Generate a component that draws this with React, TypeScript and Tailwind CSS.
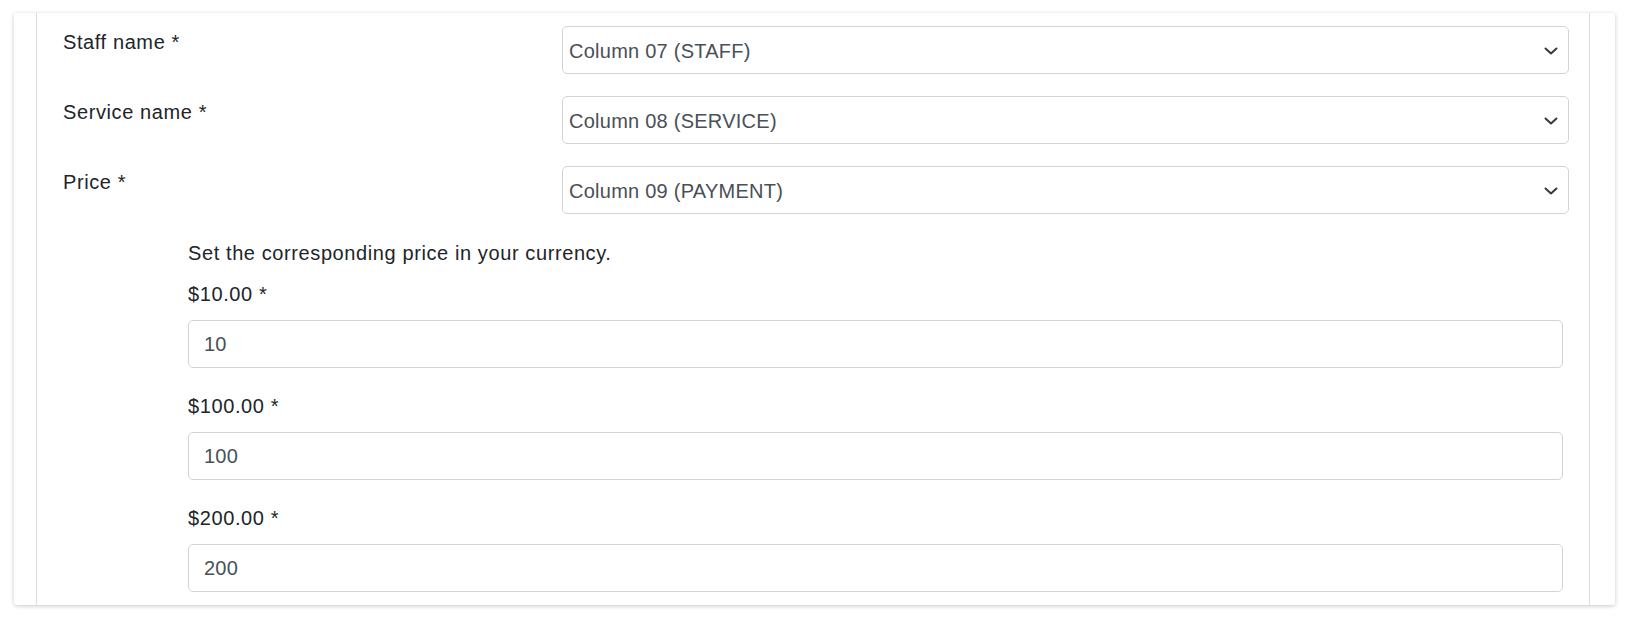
import type { ReactNode } from 'react';

const font = { fontFamily: '"Liberation Sans", Arial, sans-serif' };

function Chevron() {
  return (
    <svg width="14" height="8" viewBox="0 0 14 8" fill="none" className="shrink-0">
      <path d="M1.5 1.5L7 6.5L12.5 1.5" stroke="#343a40" strokeWidth="2" strokeLinecap="round" strokeLinejoin="round" />
    </svg>
  );
}

function SelectBox({ value }: { value: string }) {
  return (
    <div className="h-[48px] flex items-center justify-between pl-[6px] pr-[10px] pt-[1px] bg-white border border-[#ced4da] rounded-[5px] text-[#495057] tracking-[0.25px]">
      <span>{value}</span>
      <Chevron />
    </div>
  );
}

function Row({ label, children }: { label: string; children: ReactNode }) {
  return (
    <div className="grid grid-cols-[499px_1fr]">
      <div className="leading-[30px] pt-[1px] text-[#212529]">{label}</div>
      {children}
    </div>
  );
}

function PriceField({ label, value }: { label: string; value: string }) {
  return (
    <div className="flex flex-col gap-[11px]">
      <label className="leading-[30px] text-[#212529]">{label}</label>
      <input
        readOnly
        value={value}
        className="h-[48px] w-full px-[15px] bg-white border border-[#ced4da] rounded-[5px] text-[#495057] tracking-[0.25px] outline-none"
      />
    </div>
  );
}

export default function App() {
  return (
    <div className="h-[620px] w-full bg-white pt-[13px] pl-[14px] text-[20px] tracking-[0.6px]" style={font}>
      <div className="w-[1601px] h-[592px] bg-white rounded-[3px] shadow-[0_1px_4px_rgba(0,0,0,0.22)] overflow-hidden">
        <div className="ml-[22px] w-[1554px] h-full border-x border-[#dcdcdc] pt-[13px] pl-[26px] pr-[20px]">
          <div className="flex flex-col gap-[22px]">
            <Row label="Staff name *">
              <SelectBox value="Column 07 (STAFF)" />
            </Row>
            <Row label="Service name *">
              <SelectBox value="Column 08 (SERVICE)" />
            </Row>
            <Row label="Price *">
              <SelectBox value="Column 09 (PAYMENT)" />
            </Row>
          </div>

          {/* price mapping */}
          <div className="ml-[125px] mr-[6px] mt-[24px]">
            <p className="leading-[30px] text-[#212529] mb-[11px]">Set the corresponding price in your currency.</p>
            <div className="flex flex-col gap-[23px]">
              <PriceField label="$10.00 *" value="10" />
              <PriceField label="$100.00 *" value="100" />
              <PriceField label="$200.00 *" value="200" />
            </div>
          </div>
        </div>
      </div>
    </div>
  );
}
